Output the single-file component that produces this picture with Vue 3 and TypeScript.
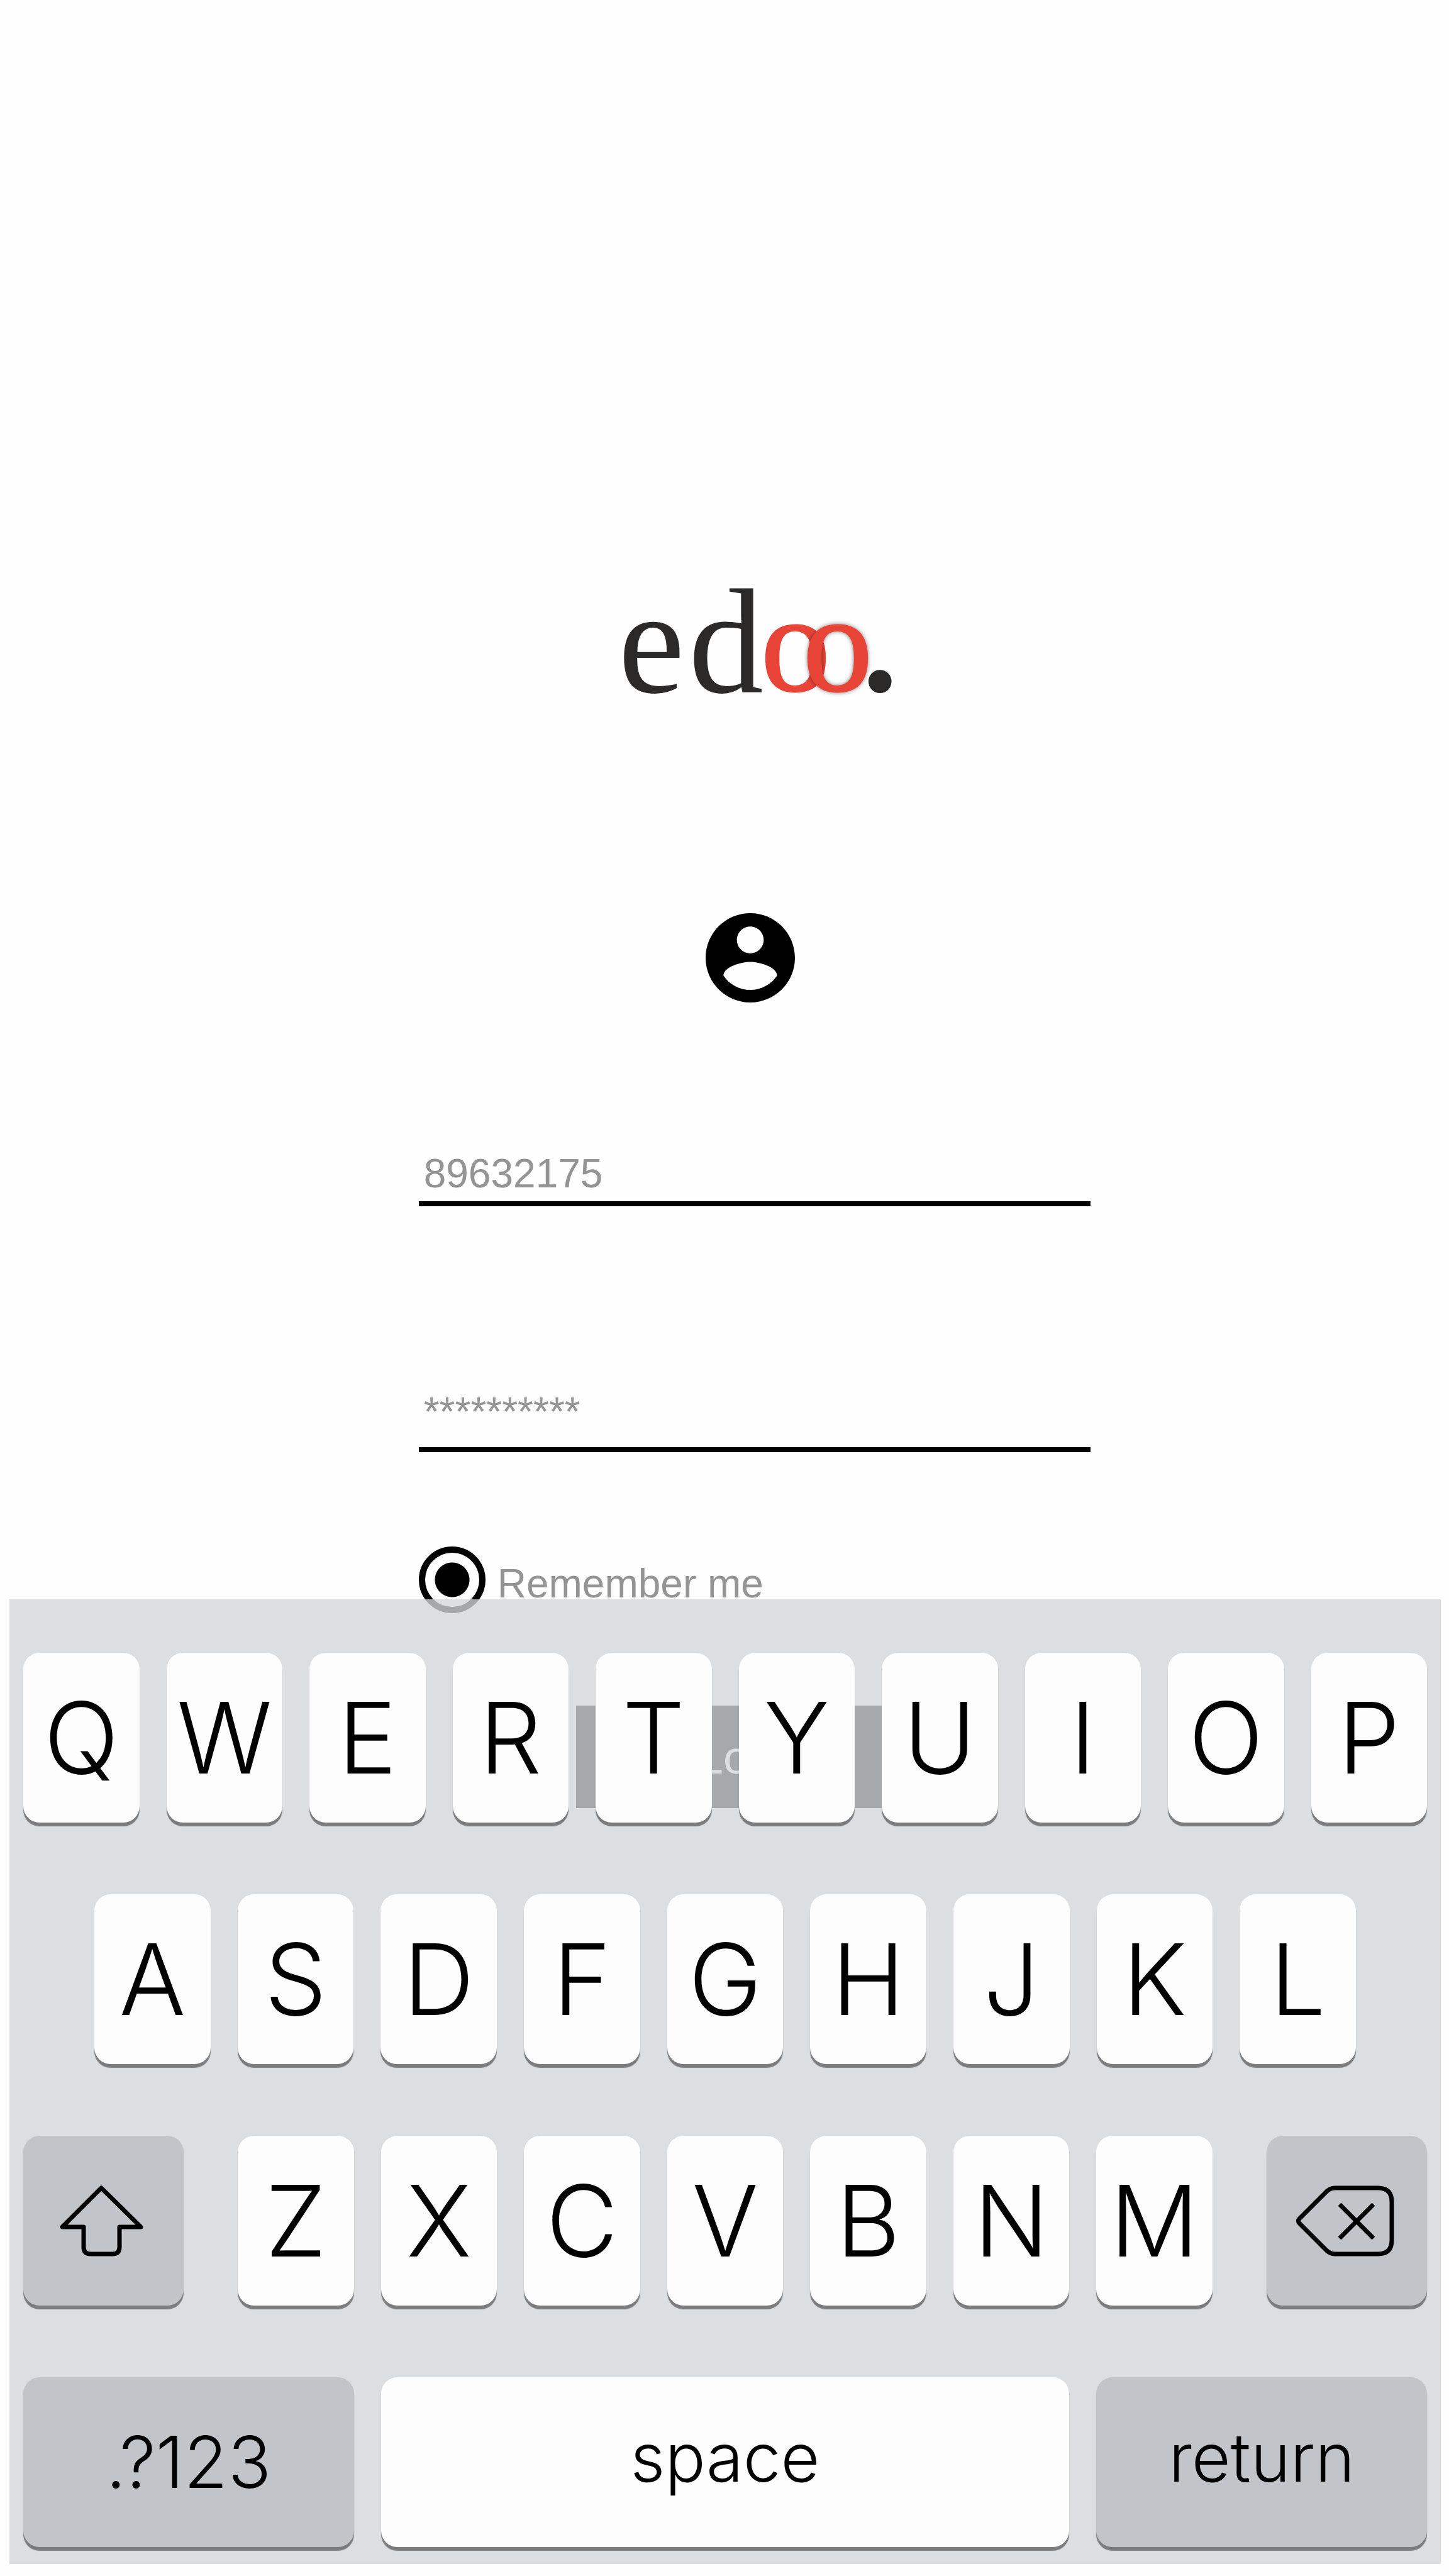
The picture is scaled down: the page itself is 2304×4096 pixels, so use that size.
<script setup lang="ts">
import { ref } from 'vue'

const username = ref('89632175')
const password = ref('**********')
const remember = ref('yes')

const topRow: string[] = [...'QWERTYUIOP']
const homeRow: string[] = [...'ASDFGHJKL']
const bottomRow: string[] = [...'ZXCVBNM']
</script>

<template>
  <div class="page">
    <main class="login">
      <svg class="logo" viewBox="0 0 440 190" role="img" aria-label="edoo.">
        <text y="176"><tspan x="3">e</tspan><tspan x="115">d</tspan></text>
        <text class="ring" x="230" y="173">o</text>
        <text class="ring front" x="297" y="173">o</text>
        <text class="dot" x="391" y="174">.</text>
      </svg>

      <svg class="avatar" viewBox="2 2 20 20" aria-hidden="true">
        <path d="M12 2C6.48 2 2 6.48 2 12s4.48 10 10 10 10-4.48 10-10S17.52 2 12 2zm0 3c1.66 0 3 1.34 3 3s-1.34 3-3 3-3-1.34-3-3 1.34-3 3-3zm0 14.2c-2.5 0-4.71-1.28-6-3.22.03-1.99 4-3.08 6-3.08 1.99 0 5.97 1.09 6 3.08-1.29 1.94-3.5 3.22-6 3.22z" />
      </svg>

      <form class="form" @submit.prevent>
        <input v-model="username" class="field" type="text" aria-label="Username" />
        <input v-model="password" class="field secret" type="text" aria-label="Password" />
        <label class="remember">
          <input v-model="remember" class="radio" type="radio" name="remember" value="yes" />
          <span class="remember-text">Remember me</span>
        </label>
        <button class="submit" type="submit">Login</button>
      </form>
    </main>

    <section class="keyboard" aria-label="Keyboard">
      <div class="row">
        <button v-for="k in topRow" :key="k" class="key" type="button">{{ k }}</button>
      </div>
      <div class="row home">
        <button v-for="k in homeRow" :key="k" class="key" type="button">{{ k }}</button>
      </div>
      <div class="row">
        <button class="key gray side" type="button" aria-label="Shift">
          <svg class="shift-icon" viewBox="0 0 133 113">
            <path d="M66 4 4 66H38V98q0 11 11 11H84q11 0 11-11V66H129Z" />
          </svg>
        </button>
        <div class="letters">
          <button v-for="k in bottomRow" :key="k" class="key" type="button">{{ k }}</button>
        </div>
        <button class="key gray side" type="button" aria-label="Delete">
          <svg class="delete-icon" viewBox="0 0 156 113">
            <path d="M5 53 49 9Q55 4 62 4H130Q152 4 152 26V87Q152 109 130 109H62Q55 109 49 104L5 60Q2 56 5 53Z" />
            <path class="cross" d="M69 30 123 84M123 30 69 84" />
          </svg>
        </button>
      </div>
      <div class="row">
        <button class="key gray symbols wide" type="button">.?123</button>
        <button class="key word space" type="button">space</button>
        <button class="key gray word wide" type="button">return</button>
      </div>
    </section>
  </div>
</template>

<style>
body {
  background: #fefefe;
}
</style>

<style scoped>
.page {
  position: relative;
  box-sizing: border-box;
  min-height: 100vh;
  padding: 925px 0 0 96px;
  background: #fefefe;
  font-family: "Liberation Sans", Arial, sans-serif;
}

.login {
  display: flex;
  flex-direction: column;
  align-items: center;
}

.logo {
  width: 440px;
  height: 190px;
  overflow: visible;
  font-family: "Liberation Serif", "Times New Roman", serif;
  font-size: 238px;
  fill: #2b2a29;
}

.ring {
  font-size: 220px;
  fill: #e84438;
  stroke: #e84438;
  stroke-width: 3;
}

.front {
  filter: drop-shadow(0 0 3px rgba(0, 0, 0, 0.5));
}

.dot {
  font-size: 226px;
  font-weight: 700;
}

.avatar {
  width: 142px;
  height: 142px;
  margin: 337px 14px 0 0;
}

.form {
  display: flex;
  flex-direction: column;
  width: 48.4%;
  margin-top: 236px;
}

.field {
  box-sizing: content-box;
  height: 72px;
  margin: 0;
  padding: 0 8px;
  padding-bottom: 8px;
  border: 0;
  border-bottom: 8px solid #000;
  border-radius: 0;
  outline: 0;
  background: transparent;
  color: #949494;
  font: 64px/72px "Liberation Sans", Arial, sans-serif;
}

.secret {
  margin-top: 291px;
  padding-bottom: 20px;
}

.remember {
  display: flex;
  align-items: center;
  gap: 19px;
  margin-top: 150px;
  color: #949494;
  font-size: 64px;
  line-height: 72px;
}

.remember-text {
  padding-top: 12px;
}

.radio {
  appearance: none;
  flex: none;
  width: 106px;
  height: 106px;
  margin: 0;
  border: 10px solid #000;
  border-radius: 50%;
  background: radial-gradient(circle, #000 27px, transparent 28px);
}

.submit {
  align-self: center;
  width: 568px;
  height: 163px;
  margin-top: 147px;
  padding: 0;
  border: 0;
  background: #000;
  color: #fff;
  font: 75px/84px "Liberation Sans", Arial, sans-serif;
}

.keyboard {
  position: absolute;
  right: 13px;
  bottom: 19px;
  left: 15px;
  display: flex;
  flex-direction: column;
  gap: 114px;
  padding: 85px 22px 27px;
  background: rgba(209, 214, 218, 0.79);
}

.row,
.letters {
  display: flex;
  gap: 43px;
}

.home {
  padding: 0 113px;
}

.letters {
  flex: 1 1 0;
  margin: 0 43px;
}

.key {
  display: flex;
  flex: 1 1 0;
  align-items: center;
  justify-content: center;
  min-width: 0;
  height: 270px;
  padding: 0;
  border: 0;
  border-radius: 26px;
  background: #fdfdfd;
  box-shadow: 0 6px 1px #7a7c7e;
  color: #000;
  font: 300 157px/184px Inter, "Liberation Sans", sans-serif;
}

.gray {
  background: #c1c5c9;
}

.side {
  flex: 0 0 255px;
  padding-right: 6px;
}

.symbols {
  font-size: 114px;
  line-height: 128px;
}

.word {
  padding-bottom: 16px;
  font-size: 107px;
  line-height: 128px;
}

.wide {
  flex-grow: 12;
}

.space {
  flex-grow: 25;
}

.shift-icon {
  width: 133px;
  height: 113px;
}

.delete-icon {
  width: 156px;
  height: 113px;
}

.shift-icon path,
.delete-icon path {
  fill: none;
  stroke: #000;
  stroke-width: 7;
  stroke-linejoin: round;
}
</style>
